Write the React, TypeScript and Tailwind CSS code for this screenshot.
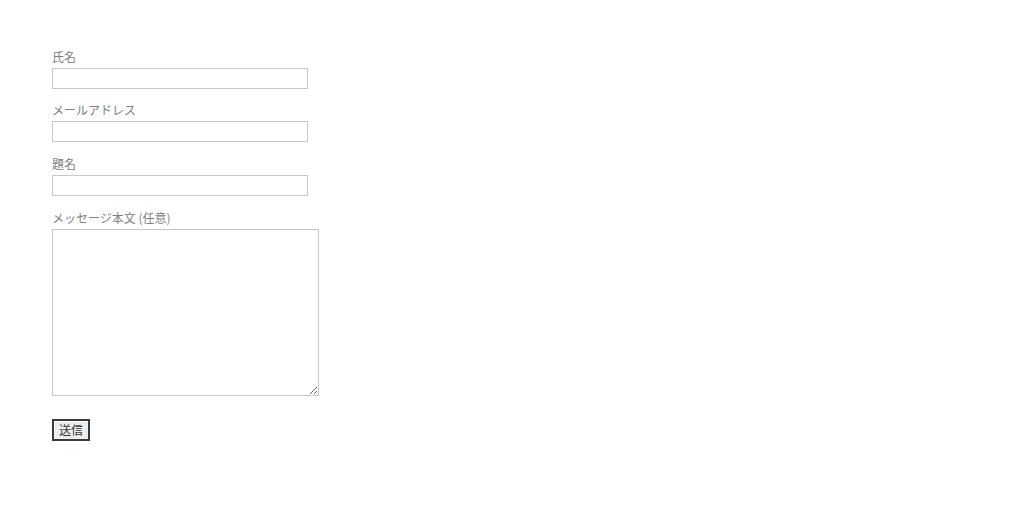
import React from "react";

export default function App() {
  const fields = ["氏名", "メールアドレス", "題名"];

  return (
    <div className="min-h-[507px] w-full bg-white pl-[52px] pt-[49px] font-['Noto_Sans_CJK_JP',sans-serif] text-[12px] text-[#808080]">
      <form className="flex flex-col items-start" onSubmit={(e) => e.preventDefault()}>
        {fields.map((label, i) => (
          <div key={label} className={`flex flex-col items-start ${i === 0 ? "mb-[13px]" : "mb-[14px]"}`}>
            <label className="mb-[3px] block leading-4">{label}</label>
            <input
              type="text"
              className="block h-[21px] w-[256px] border border-[#c8c8c8] bg-white px-1 text-[12px] text-[#333] outline-none"
            />
          </div>
        ))}
        <div className="flex flex-col items-start">
          <label className="mb-[3px] block leading-4">メッセージ本文 (任意)</label>
          <textarea className="block h-[167px] w-[267px] resize border border-[#c8c8c8] bg-white p-1 text-[12px] text-[#333] outline-none" />
        </div>
        <button
          type="submit"
          className="mt-[23px] flex h-[22px] w-[38px] items-center justify-center border-2 border-[#3a3a3a] bg-[#ededed] text-[12px] leading-none text-[#333] shadow-[inset_1px_1px_0_#fff]"
        >
          送信
        </button>
      </form>
    </div>
  );
}
